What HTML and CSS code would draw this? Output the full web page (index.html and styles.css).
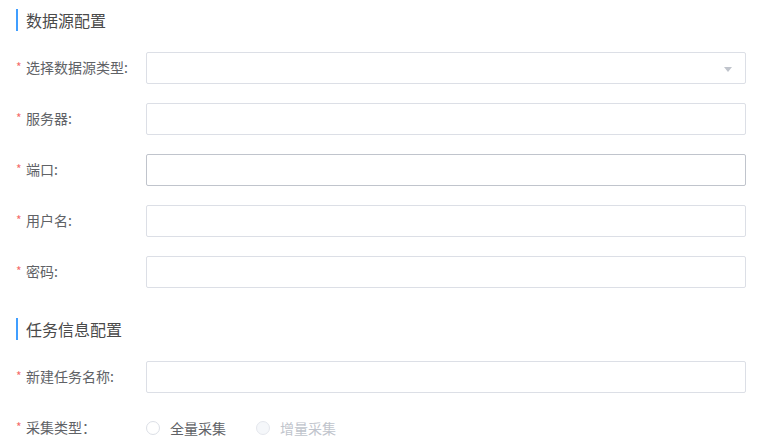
FILE: index.html
```html
<!DOCTYPE html>
<html lang="zh">
<head>
<meta charset="utf-8">
<link rel="stylesheet" href="styles.css">
</head>
<body>
<div class="page">
  <div class="section-title">数据源配置</div>
  <div class="form">
    <div class="row">
      <label class="label"><span class="star">*</span>选择数据源类型:</label>
      <div class="input select"><span class="arrow"></span></div>
    </div>
    <div class="row">
      <label class="label"><span class="star">*</span>服务器:</label>
      <div class="input"></div>
    </div>
    <div class="row">
      <label class="label"><span class="star">*</span>端口:</label>
      <div class="input hover"></div>
    </div>
    <div class="row">
      <label class="label"><span class="star">*</span>用户名:</label>
      <div class="input"></div>
    </div>
    <div class="row">
      <label class="label"><span class="star">*</span>密码:</label>
      <div class="input"></div>
    </div>
  </div>
  <div class="section-title second">任务信息配置</div>
  <div class="form">
    <div class="row">
      <label class="label"><span class="star">*</span>新建任务名称:</label>
      <div class="input"></div>
    </div>
    <div class="row">
      <label class="label"><span class="star">*</span>采集类型：</label>
      <div class="radios">
        <span class="radio"><span class="dot"></span>全量采集</span>
        <span class="radio disabled"><span class="dot"></span>增量采集</span>
      </div>
    </div>
  </div>
</div>
</body>
</html>
```
FILE: styles.css
```css
html, body {
  margin: 0;
  padding: 0;
  background: #fff;
}
.page {
  padding: 9px 20px 0 16px;
  font-family: "Noto Sans CJK SC", "Noto Sans", sans-serif;
}
.section-title {
  border-left: 2px solid #409eff;
  padding-left: 8px;
  height: 22px;
  line-height: 22px;
  font-size: 16px;
  color: #4a4a4a;
}
.section-title.second {
  margin-top: 30px;
}
.form {
  margin-top: 21px;
  display: flex;
  flex-direction: column;
  gap: 19px;
}
.row {
  display: flex;
  align-items: center;
  height: 32px;
}
.label {
  width: 130px;
  flex: none;
  font-size: 14px;
  line-height: 20px;
  color: #606266;
  display: flex;
  align-items: center;
  margin-top: -2px;
}
.star {
  color: #f56c6c;
  width: 10px;
  font-size: 12px;
}
.input {
  flex: none;
  width: 600px;
  height: 32px;
  box-sizing: border-box;
  border: 1px solid #dcdfe6;
  border-radius: 2px;
  position: relative;
}
.input.hover {
  border-color: #c0c4cc;
}
.arrow {
  position: absolute;
  right: 13px;
  top: 14px;
  width: 0;
  height: 0;
  border-left: 4px solid transparent;
  border-right: 4px solid transparent;
  border-top: 5px solid #c0c4cc;
}
.radios {
  display: flex;
  gap: 30px;
  font-size: 14px;
  line-height: 20px;
}
.radio {
  display: flex;
  align-items: center;
  color: #606266;
}
.radio .dot {
  width: 14px;
  height: 14px;
  box-sizing: border-box;
  border: 1px solid #dcdfe6;
  border-radius: 50%;
  margin-right: 10px;
  background: #fff;
}
.radio.disabled {
  color: #c0c4cc;
}
.radio.disabled .dot {
  background: #f5f7fa;
  border-color: #e4e7ed;
}
```
